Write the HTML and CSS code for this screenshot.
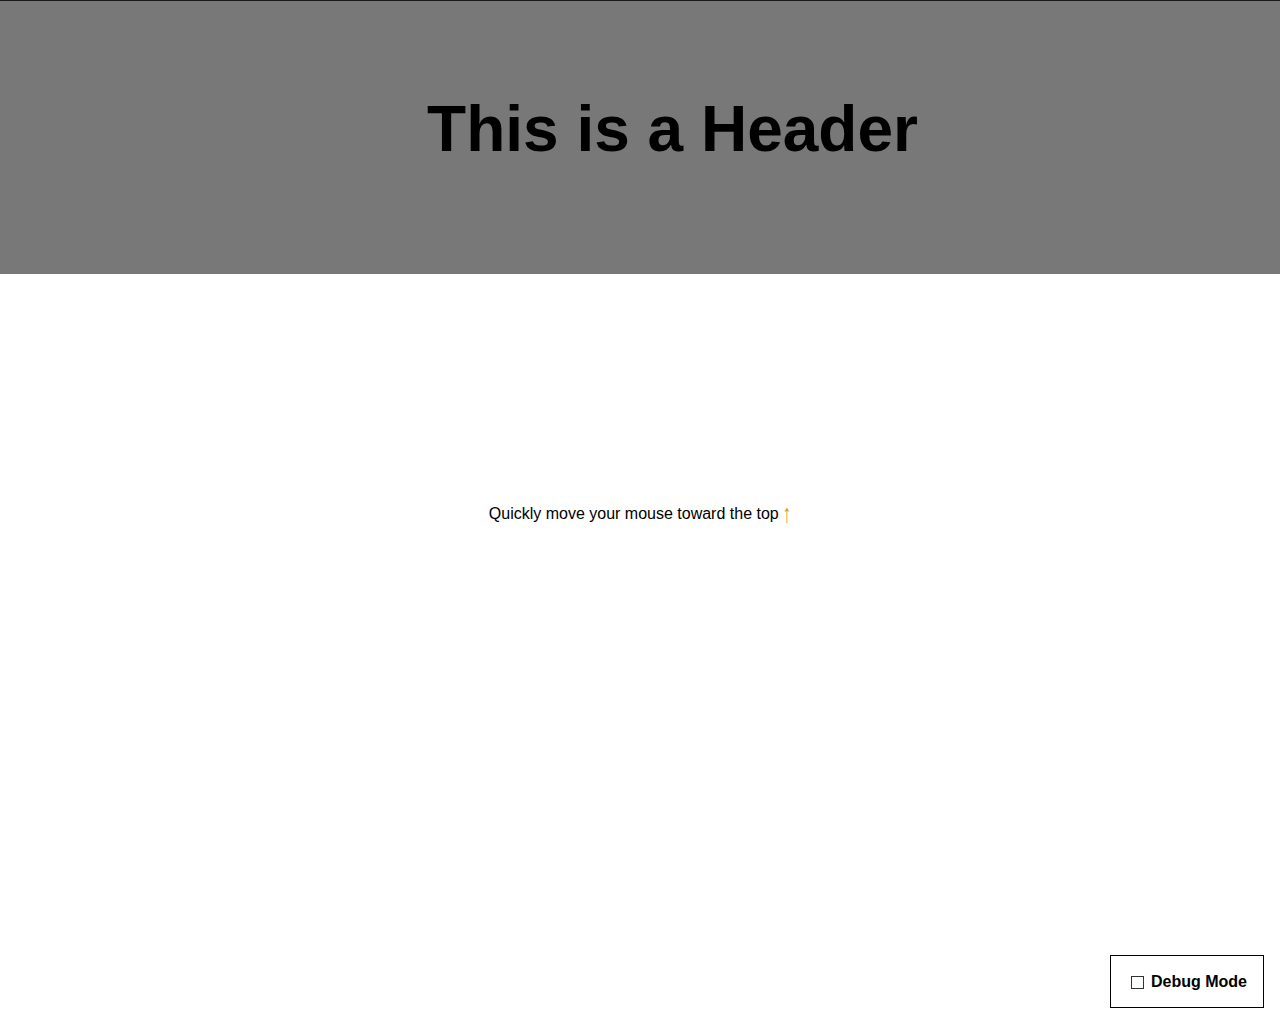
FILE: index.html
```html
<!DOCTYPE html>
<html lang="en">
<head>
<meta charset="utf-8">
<title>Header</title>
<link rel="stylesheet" href="styles.css">
</head>
<body>
<header class="site-header">
  <h1 class="site-title">This is a Header</h1>
</header>
<main class="content">
  <p class="hint">Quickly move your mouse toward the top <span class="arrow">↑</span></p>
</main>
<label class="debug-toggle">
  <span class="debug-box"></span>
  <span class="debug-label">Debug Mode</span>
</label>
</body>
</html>
```
FILE: styles.css
```css
html, body {
  margin: 0;
  padding: 0;
  background: #ffffff;
  font-family: "Liberation Sans", Arial, sans-serif;
  color: #000000;
}

.site-header {
  box-sizing: border-box;
  height: 274px;
  background: #787878;
  border-top: 1px solid #1a1a1a;
  padding-top: 91px;
  padding-left: 65px;
}

.site-title {
  margin: 0;
  text-align: center;
  font-size: 64px;
  line-height: 74px;
  font-weight: bold;
}

.content {
  padding-top: 231px;
}

.hint {
  margin: 0;
  text-align: center;
  font-size: 16px;
  line-height: 18px;
}

.arrow {
  display: inline-block;
  color: #d9912a;
  transform: translateY(1px) scale(1.1, 1.6);
  transform-origin: 50% 60%;
}

.debug-toggle {
  position: fixed;
  right: 16px;
  bottom: 16px;
  box-sizing: border-box;
  width: 154px;
  height: 53px;
  border: 1px solid #000000;
  background: #ffffff;
  display: flex;
  align-items: center;
  gap: 7px;
  padding: 0 15px 0 20px;
}

.debug-box {
  box-sizing: border-box;
  width: 13px;
  height: 13px;
  border: 1px solid #333333;
  flex: none;
  margin-top: 1px;
}

.debug-label {
  font-size: 16px;
  font-weight: bold;
  line-height: 18px;
  margin-top: 1px;
}
```
